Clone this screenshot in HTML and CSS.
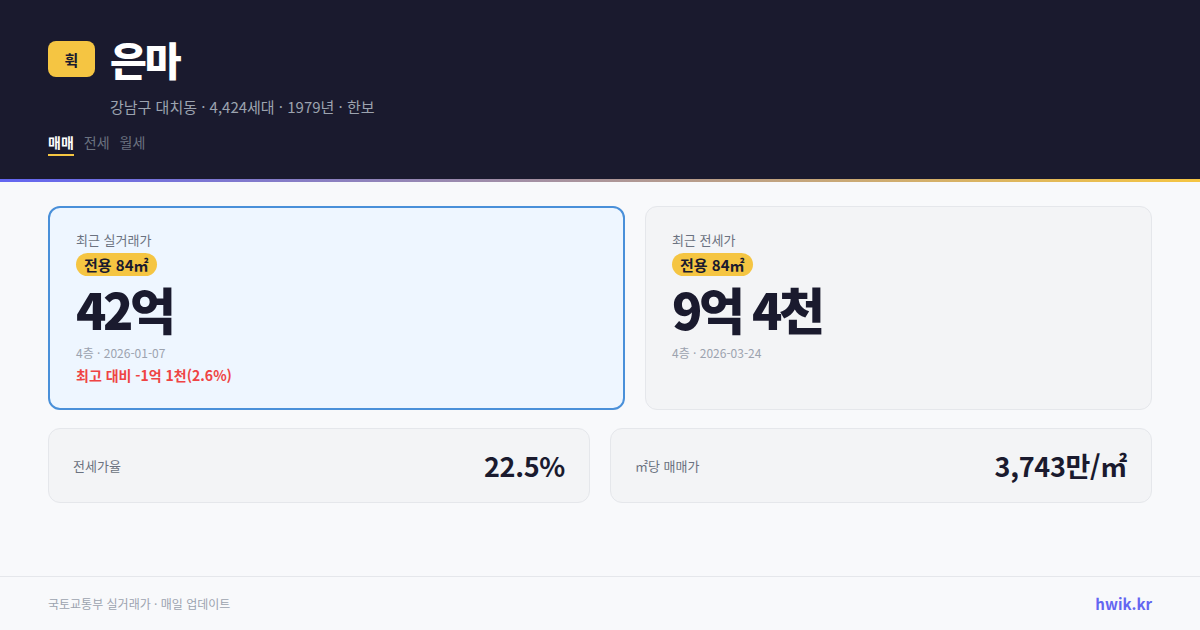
FILE: index.html
```html
<!DOCTYPE html>
<html lang="ko">
<head>
<meta charset="utf-8">
<link rel="stylesheet" href="styles.css">
</head>
<body>
<div class="page">
  <header class="hero">
    <div class="title-row">
      <div class="logo">휙</div>
      <h1 class="title">은마</h1>
    </div>
    <div class="sub">강남구 대치동 · 4,424세대 · 1979년 · 한보</div>
    <nav class="tabs">
      <span class="tab active">매매</span>
      <span class="tab">전세</span>
      <span class="tab">월세</span>
    </nav>
  </header>
  <div class="grad"></div>
  <main class="main">
    <div class="cards">
      <div class="card primary">
        <div class="label">최근 실거래가</div>
        <div class="pill">전용 84㎡</div>
        <div class="big">42억</div>
        <div class="meta">4층 · 2026-01-07</div>
        <div class="diff">최고 대비 -1억 1천(2.6%)</div>
      </div>
      <div class="card">
        <div class="label">최근 전세가</div>
        <div class="pill">전용 84㎡</div>
        <div class="big">9억 4천</div>
        <div class="meta">4층 · 2026-03-24</div>
      </div>
    </div>
    <div class="stats">
      <div class="stat">
        <span class="stat-label">전세가율</span>
        <span class="stat-value">22.5%</span>
      </div>
      <div class="stat">
        <span class="stat-label">㎡당 매매가</span>
        <span class="stat-value">3,743만/㎡</span>
      </div>
    </div>
  </main>
  <footer class="footer">
    <span class="src">국토교통부 실거래가 · 매일 업데이트</span>
    <span class="brand">hwik.kr</span>
  </footer>
</div>
</body>
</html>
```
FILE: styles.css
```css
* { box-sizing: border-box; margin: 0; padding: 0; }
html, body { width: 1200px; height: 630px; overflow: hidden; }
body {
  background: #f8f9fb;
  font-family: "Noto Sans CJK KR", "Noto Sans", sans-serif;
  color: #1a1a2e;
}
.page { display: flex; flex-direction: column; height: 630px; }
.hero {
  background: #1a1a2e;
  height: 179px;
  padding: 34px 48px 0;
}
.title-row { display: flex; align-items: center; gap: 15px; }
.logo {
  width: 47px; height: 36px;
  background: #f5c542;
  border-radius: 8px;
  display: flex; align-items: center; justify-content: center;
  font-size: 15px; font-weight: 700; color: #1a1a2e;
}
.title {
  font-size: 40px; font-weight: 900; color: #ffffff;
  line-height: 50px; letter-spacing: -2px;
}
.sub {
  margin: 12px 0 0 62px;
  font-size: 15px; color: #9ca3af; line-height: 22px;
}
.tabs { display: flex; gap: 10px; margin-top: 14px; }
.tab {
  font-size: 14px; color: #6b7280; line-height: 20px;
  padding-bottom: 2px;
}
.tab.active {
  color: #ffffff; font-weight: 700;
  border-bottom: 2px solid #f5c542;
}
.grad {
  height: 3px;
  background: linear-gradient(90deg, #6366f1, #f5c542);
}
.main { flex: 1; padding: 24px 48px 0; }
.cards {
  display: grid;
  grid-template-columns: 577px 507px;
  gap: 20px;
}
.card {
  height: 204px;
  background: #f3f4f6;
  border: 1px solid #e5e7eb;
  border-radius: 12px;
  padding: 24px 26px 0 26px;
}
.card.primary {
  background: #eef6ff;
  border: 2px solid #4a90d9;
  padding: 23px 26px 0 26px;
}
.label { font-size: 13px; color: #6b7280; line-height: 18px; }
.pill {
  display: inline-block;
  background: #f5c542;
  border-radius: 12px;
  padding: 0 8px;
  margin-top: 4px;
  font-size: 15px; font-weight: 700; color: #1a1a2e;
  line-height: 23px;
}
.big {
  font-size: 50px; font-weight: 800; color: #1a1a2e;
  line-height: 50px; letter-spacing: -3.5px;
  margin-top: 7px;
}
.meta { font-size: 12px; color: #9ca3af; line-height: 18px; margin-top: 11px; }
.diff { font-size: 14px; font-weight: 700; color: #ef4444; line-height: 22px; margin-top: 2px; }
.stats {
  display: grid;
  grid-template-columns: 1fr 1fr;
  gap: 20px;
  margin-top: 18px;
}
.stat {
  height: 75px;
  background: #f3f4f6;
  border: 1px solid #e5e7eb;
  border-radius: 12px;
  padding: 0 24px;
  display: flex; align-items: center; justify-content: space-between;
}
.stat-label { font-size: 13px; color: #6b7280; }
.stat-value { font-size: 27px; font-weight: 700; color: #1a1a2e; letter-spacing: -0.3px; }
.footer {
  height: 54px;
  border-top: 1px solid #e5e7eb;
  display: flex; align-items: center; justify-content: space-between;
  padding: 0 48px;
}
.src { font-size: 12px; color: #9ca3af; }
.brand { font-size: 15px; font-weight: 700; color: #6366f1; }
```
